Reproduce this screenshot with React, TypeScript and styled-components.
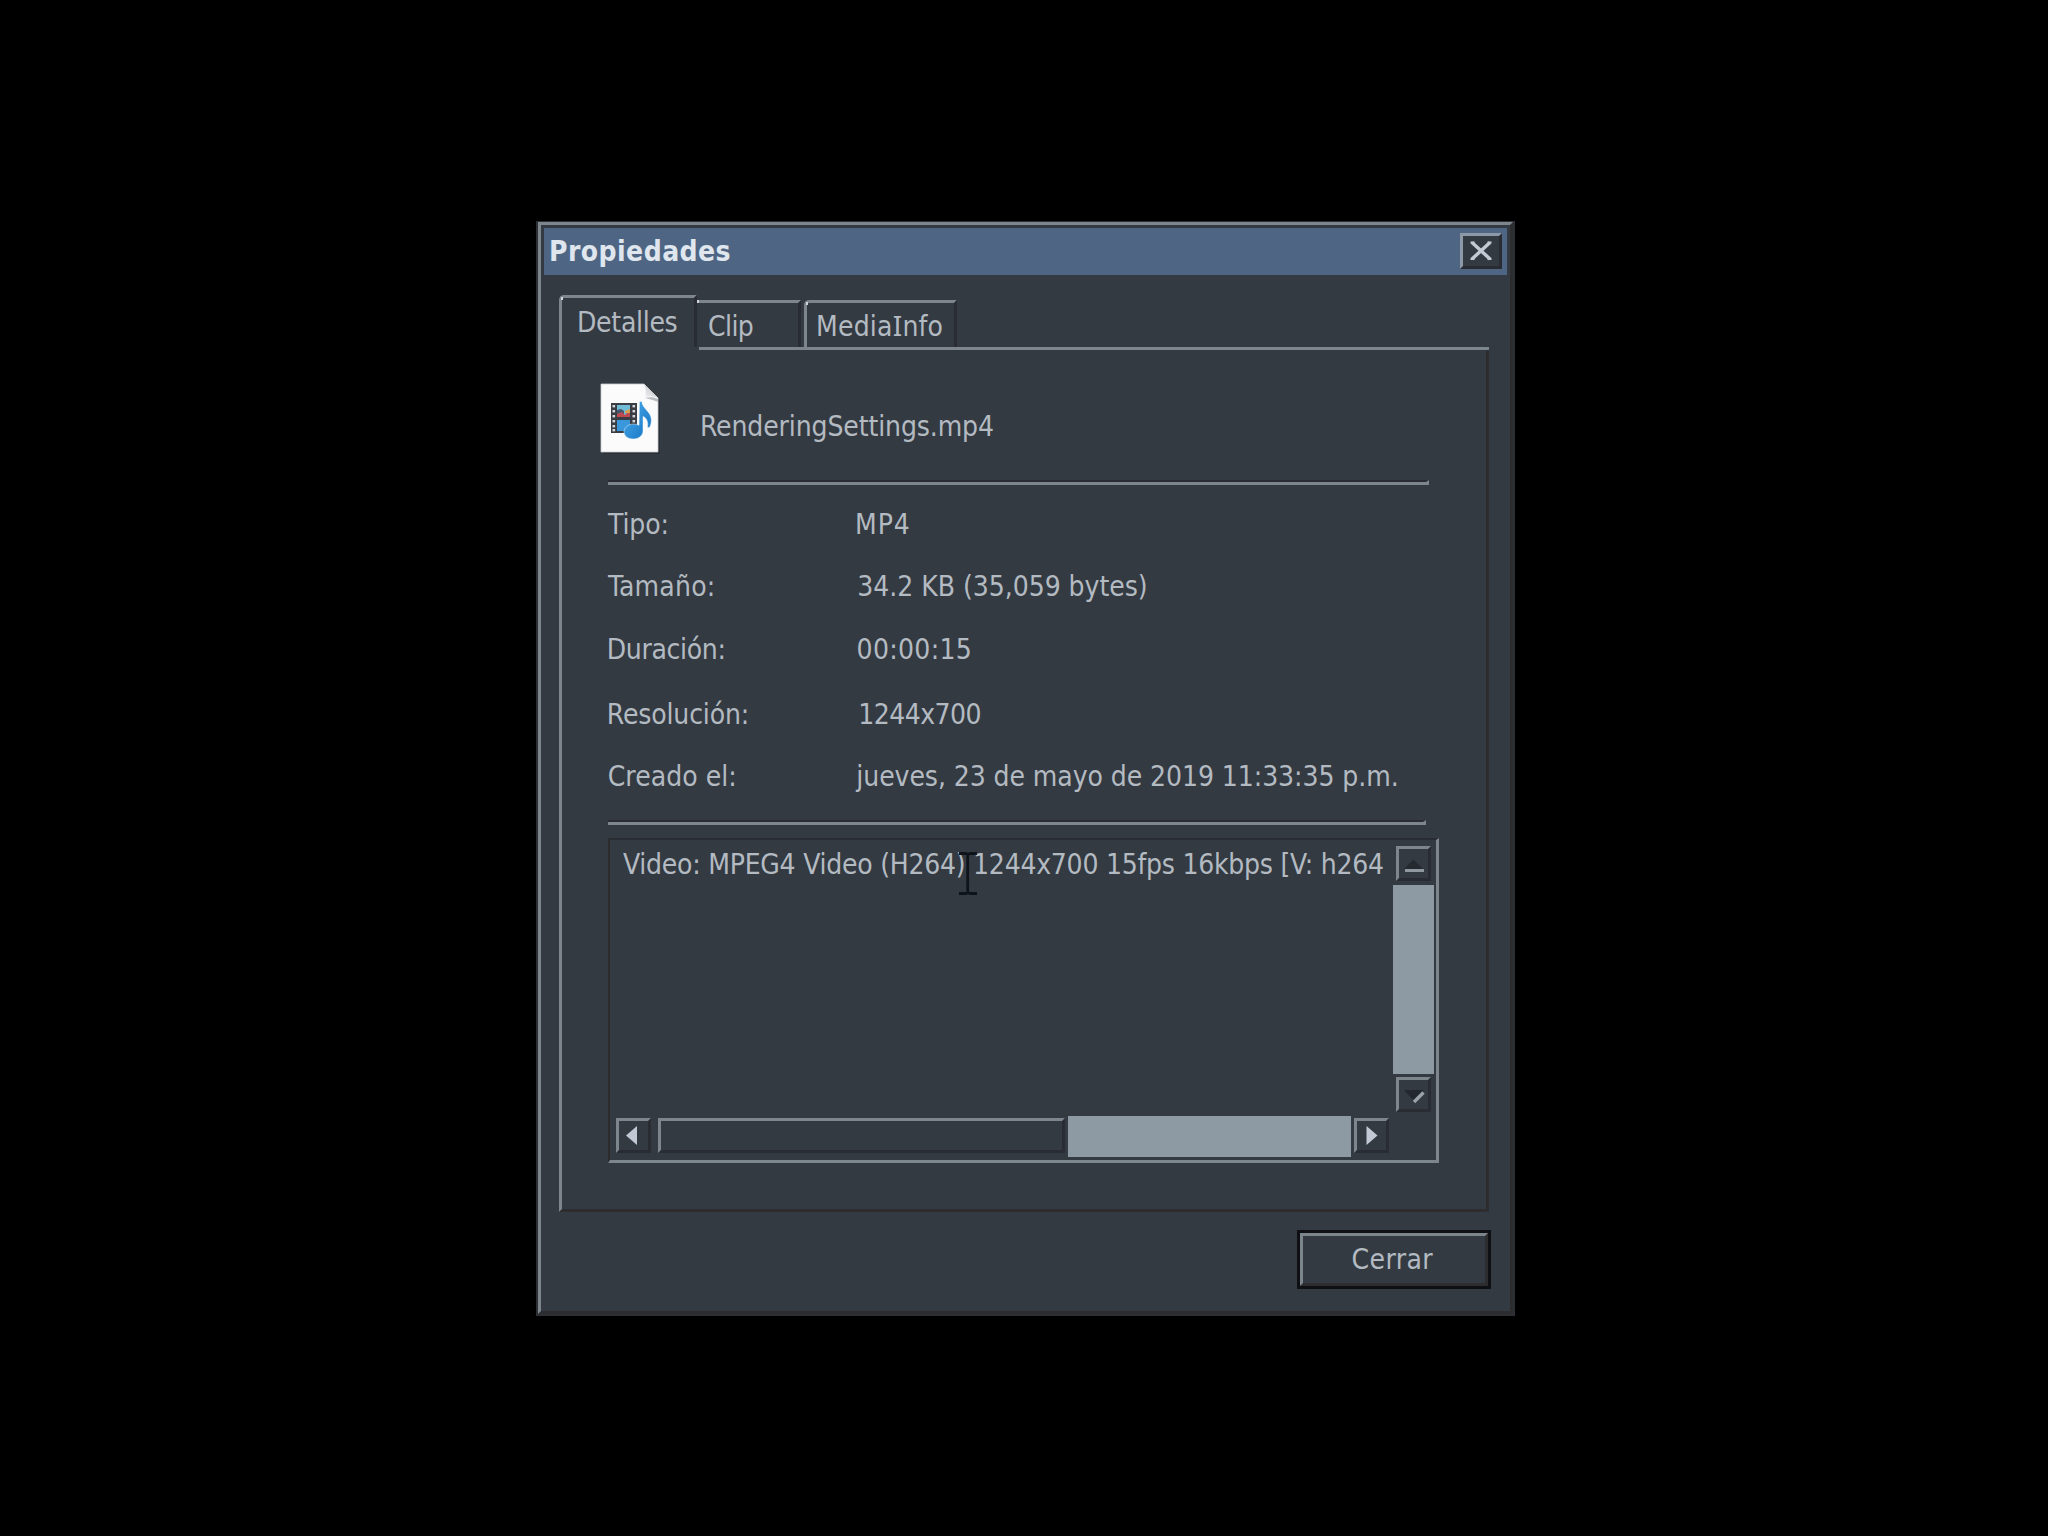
import React from 'react';
import styled, { createGlobalStyle } from 'styled-components';

const C = {
  face: '#333a42',
  light: '#7d858d',
  bright: '#cdd3d9',
  dark: '#292d33',
  brown: '#2d2c2f',
  text: '#b3bac1',
  track: '#8d99a3',
  title: '#4f6584',
};

const Global = createGlobalStyle`
  * { box-sizing: border-box; }
  body { margin: 0; background: #000; }
`;

const Screen = styled.main`
  width: 2048px;
  height: 1536px;
  padding: 221px 0 0 536px;
  overflow: hidden;
  background: #000;
  color: ${C.text};
  font-family: 'DejaVu Sans Condensed', 'DejaVu Sans', Tahoma, Verdana, sans-serif;
  font-stretch: condensed;
  font-size: 28px;
  line-height: 33px;
`;

const Window = styled.section`
  width: 979px;
  height: 1095px;
  border: 2px solid #2c3034;
  border-top-width: 1px;
  background: ${C.face};
`;

const Frame = styled.div`
  height: 100%;
  padding: 3px 3px 0;
  border: 3px solid;
  border-color: ${C.light} ${C.brown} ${C.brown} ${C.light};
`;

const Text = styled.span<{ $spacing?: number; $shift?: number }>`
  display: block;
  white-space: nowrap;
  letter-spacing: ${p => p.$spacing ?? 0}px;
  margin-left: ${p => p.$shift ?? 0}px;
`;

const SerifI = styled.span`
  font-family: 'Noto Sans', sans-serif;
  line-height: 1;
`;

const TitleBar = styled.header`
  display: flex;
  justify-content: space-between;
  height: 47px;
  padding: 5px 5px 0 5px;
  background: ${C.title};
`;

const Title = styled.h1`
  margin: 2px 0 0;
  font-size: 28px;
  font-weight: 700;
  letter-spacing: 0.45px;
  color: #dfe6ee;
`;

const BevelButton = styled.button<{ $w: number; $h: number }>`
  display: flex;
  align-items: center;
  justify-content: center;
  flex: none;
  width: ${p => p.$w}px;
  height: ${p => p.$h}px;
  padding: 0;
  border: 3px solid;
  border-color: ${C.light} ${C.dark} ${C.dark} ${C.light};
  background: ${C.face};
`;

const CloseButton = styled(BevelButton)`
  border-color: #8d99a7 ${C.dark} ${C.dark} #8d99a7;
`;

const Tabs = styled.nav`
  display: flex;
  align-items: flex-end;
  height: 52px;
  margin: 20px 0 0 15px;
`;

const Tab = styled.div<{ $w: number; $pad: number; $active?: boolean; $open?: boolean; $gap?: number }>`
  position: relative;
  width: ${p => p.$w}px;
  height: ${p => (p.$active ? 52 : 47)}px;
  margin-left: ${p => p.$gap ?? 0}px;
  padding: ${p => (p.$active ? 8 : 7)}px 0 0 ${p => p.$pad}px;
  border-style: solid;
  border-width: 3px 3px 0 ${p => (p.$open ? 0 : 3)}px;
  border-color: ${C.light} ${C.dark} transparent ${C.light};
  border-top-left-radius: ${p => (p.$open ? 0 : 5)}px;

  &::before {
    content: '';
    position: absolute;
    top: ${p => (p.$open ? -3 : -1)}px;
    left: ${p => (p.$open ? 0 : -1)}px;
    width: 2px;
    height: 3px;
    background: ${C.bright};
  }
`;

const Panel = styled.div`
  width: 930px;
  height: 865px;
  margin-left: 15px;
  border-left: 3px solid ${C.light};
  border-right: 3px solid ${C.brown};
  border-bottom: 3px solid ${C.brown};
`;

const PanelEdge = styled.div`
  height: 3px;
  margin: 0 -3px 0 137px;
  background: ${C.light};
`;

const PanelBody = styled.div`
  padding: 33px 0 0 46px;
`;

const FileRow = styled.div`
  display: flex;
  height: 97px;
  margin-left: -8px;
`;

const FileName = styled(Text)`
  padding: 27px 0 0 38px;
`;

const Divider = styled.div<{ $w: number }>`
  width: ${p => p.$w}px;
  height: 5px;
  border-top: 2px solid ${C.dark};
  border-right: 3px solid ${C.light};
  background: ${C.light};
`;

const Details = styled.div`
  display: grid;
  grid-template-columns: 245px 1fr;
  grid-template-rows: 62px 63px 65px 62px 60px;
  padding-top: 23px;
`;

const InfoBox = styled.div`
  width: 831px;
  height: 325px;
  margin-top: 13px;
  border: solid;
  border-width: 2px 3px 3px 2px;
  border-color: ${C.dark} ${C.light} ${C.light} ${C.brown};
`;

const InfoMain = styled.div`
  display: flex;
  height: 275px;
`;

const InfoText = styled.div`
  position: relative;
  flex: 1;
  padding: 8px 0 0 13px;
`;

const Caret = styled.svg`
  position: absolute;
  left: 348px;
  top: 12px;
`;

const VBar = styled.div`
  display: flex;
  flex-direction: column;
  align-items: center;
  width: 42px;
  margin-right: 2px;
  padding-top: 6px;
`;

const VTrack = styled.div`
  width: 41px;
  height: 189px;
  margin: 4px 0 3px;
  background: ${C.track};
`;

const HBar = styled.div`
  display: flex;
  align-items: flex-start;
  height: 42px;
  padding: 3px 0 0 6px;
`;

const HThumb = styled.div`
  width: 407px;
  height: 35px;
  margin: 0 3px 0 7px;
  border: 3px solid;
  border-color: ${C.light} ${C.dark} ${C.dark} ${C.light};
`;

const HTrack = styled.div`
  width: 283px;
  height: 41px;
  margin: -2px 3px 0 0;
  background: ${C.track};
`;

const Footer = styled.footer`
  display: flex;
  justify-content: flex-end;
  padding: 18px 16px 0 0;
`;

const DefaultRing = styled.div`
  border: 3px solid #0e1013;
`;

const ActionButton = styled(BevelButton)`
  align-items: flex-start;
  justify-content: flex-start;
  padding: 7px 0 0 48.5px;
  border-color: ${C.light} ${C.brown} ${C.brown} ${C.light};
  color: inherit;
  font: inherit;
`;

const details = [
  { label: 'Tipo:', ls: -0.1, x: 0, value: 'MP4', vls: 0.9, vx: 2 },
  { label: 'Tamaño:', ls: 0.2, x: 0, value: '34.2 KB (35,059 bytes)', vls: -0.03, vx: 4.3 },
  { label: 'Duración:', ls: -0.35, x: -1.2, value: '00:00:15', vls: 0.3, vx: 3.6 },
  { label: 'Resolución:', ls: -0.15, x: -1.2, value: '1244x700', vls: -0.55, vx: 5.3 },
  { label: 'Creado el:', ls: 0.05, x: -0.3, value: 'jueves, 23 de mayo de 2019 11:33:35 p.m.', vls: -0.07, vx: 3.3 },
];

const MediaFileIcon = () => (
  <svg width="62" height="72" viewBox="0 0 62 72">
    <defs>
      <linearGradient id="fold" x1="0" y1="1" x2="1" y2="0">
        <stop offset="0" stopColor="#f4f4f6" />
        <stop offset="0.5" stopColor="#d4d6da" />
        <stop offset="1" stopColor="#8c9197" />
      </linearGradient>
      <linearGradient id="note" x1="0" y1="0" x2="1" y2="1">
        <stop offset="0" stopColor="#4db0ee" />
        <stop offset="1" stopColor="#1470c0" />
      </linearGradient>
    </defs>
    <path d="M3 3h43l14 14v54H3z" fill="#24292f" opacity=".6" />
    <path d="M1 1h43l14 14v54H1z" fill="#fbfbfc" stroke="#c9ccd0" strokeWidth=".8" />
    <path d="M44 1l14 14c-4-2-9-2-13-1 1-4 1-9-1-13z" fill="url(#fold)" />
    <path d="M45 15c4-1 9-1 13 1v3c-4-2-9-3-13-4z" fill="#b9bcc1" />
    <rect x="11" y="20" width="26" height="30" fill="#3a3e44" />
    <rect x="17" y="22" width="13" height="12" fill="#6fbcd8" />
    <path d="M17 27l4-1 3 2v6h-7z" fill="#46566e" />
    <path d="M17 31l5-2 3 3 3-3 2 1v4H17z" fill="#c04a50" />
    <path d="M25 28l5-2v4h-5z" fill="#d9a050" />
    <rect x="17" y="37" width="13" height="11" fill="#3b97dc" />
    {[22, 27, 32, 37, 42, 46].map(y => (
      <g key={y} fill="#d4d8dc">
        <rect x="12.5" y={y} width="2.6" height="2.4" />
        <rect x="32.5" y={y} width="2.6" height="2.4" />
      </g>
    ))}
    <path
      d="M39.500 18.500h2.300c.5 7 9.200 10 9.500 18 .1 3-.6 6-1.800 8h-2c1-5-1-10-4.500-11v14.500c0 4.500-4.500 8-9.800 8s-9.200-3-9.200-7.200 4.500-7.800 9.500-7.800c2 0 4 .4 5.500 1.300z"
      fill="url(#note)"
      stroke="#e9f3fa"
      strokeWidth=".5"
    />
  </svg>
);

export default function App() {
  return (
    <>
      <Global />
      <Screen>
        <Window>
          <Frame>
            <TitleBar>
              <Title>Propiedades</Title>
              <CloseButton $w={42} $h={36} aria-label="Cerrar ventana">
                <svg width="24" height="20" viewBox="0 0 24 20">
                  <path d="M3 1.500L21 18M21 1.500L3 18" stroke="#c3cad4" strokeWidth="3.400" />
                  <path d="M1.500 1.500h4M18.500 1.500h4M1.500 18h4M18.500 18h4" stroke="#c3cad4" strokeWidth="2" />
                </svg>
              </CloseButton>
            </TitleBar>

            <Tabs>
              <Tab $w={138} $pad={15} $active>
                <Text $spacing={-0.3}>Detalles</Text>
              </Tab>
              <Tab $w={104} $pad={11} $open>
                <Text $spacing={-0.6}>Clip</Text>
              </Tab>
              <Tab $w={153} $pad={9} $gap={3}>
                <Text $spacing={0.2}>
                  Media<SerifI>I</SerifI>nfo
                </Text>
              </Tab>
            </Tabs>

            <Panel>
              <PanelEdge />
              <PanelBody>
                <FileRow>
                  <MediaFileIcon />
                  <FileName $spacing={-0.12}>RenderingSettings.mp4</FileName>
                </FileRow>
                <Divider $w={821} />
                <Details>
                  {details.map(d => (
                    <React.Fragment key={d.label}>
                      <Text $spacing={d.ls} $shift={d.x}>{d.label}</Text>
                      <Text $spacing={d.vls} $shift={d.vx}>{d.value}</Text>
                    </React.Fragment>
                  ))}
                </Details>
                <Divider $w={818} />
                <InfoBox>
                  <InfoMain>
                    <InfoText>
                      <Text $spacing={-0.25}>Video: MPEG4 Video (H264) 1244x700 15fps 16kbps [V: h264</Text>
                      <Caret width="20" height="43" viewBox="0 0 20 43">
                        <path d="M1 1.500h7l2 1 2-1h7M1 41.500h7l2-1 2 1h7M9.700 2v39" fill="none" stroke="#0f141a" strokeWidth="2.800" />
                      </Caret>
                    </InfoText>
                    <VBar>
                      <BevelButton $w={35} $h={35} aria-label="Arriba">
                        <svg width="29" height="29" viewBox="0 0 29 29">
                          <path d="M5 20L14.500 10.500 24 20z" fill="#252a30" />
                          <path d="M6 21.500h19" stroke="#8f979f" strokeWidth="3" />
                        </svg>
                      </BevelButton>
                      <VTrack />
                      <BevelButton $w={35} $h={35} aria-label="Abajo">
                        <svg width="29" height="29" viewBox="0 0 29 29">
                          <path d="M5 10h20l-10 11z" fill="#23282e" />
                          <path d="M15 22l9.500-9.500" stroke="#9aa1a9" strokeWidth="3.400" />
                        </svg>
                      </BevelButton>
                    </VBar>
                  </InfoMain>
                  <HBar>
                    <BevelButton $w={35} $h={35} aria-label="Izquierda">
                      <svg width="29" height="29" viewBox="0 0 29 29">
                        <path d="M7 14.500L18 5v19z" fill="#c3c9d4" />
                      </svg>
                    </BevelButton>
                    <HThumb />
                    <HTrack />
                    <BevelButton $w={35} $h={35} aria-label="Derecha">
                      <svg width="29" height="29" viewBox="0 0 29 29">
                        <path d="M20.500 14.500L9.500 5v19z" fill="#c3c9d4" />
                      </svg>
                    </BevelButton>
                  </HBar>
                </InfoBox>
              </PanelBody>
            </Panel>

            <Footer>
              <DefaultRing>
                <ActionButton $w={188} $h={53}>
                  <Text $spacing={0.4}>Cerrar</Text>
                </ActionButton>
              </DefaultRing>
            </Footer>
          </Frame>
        </Window>
      </Screen>
    </>
  );
}
